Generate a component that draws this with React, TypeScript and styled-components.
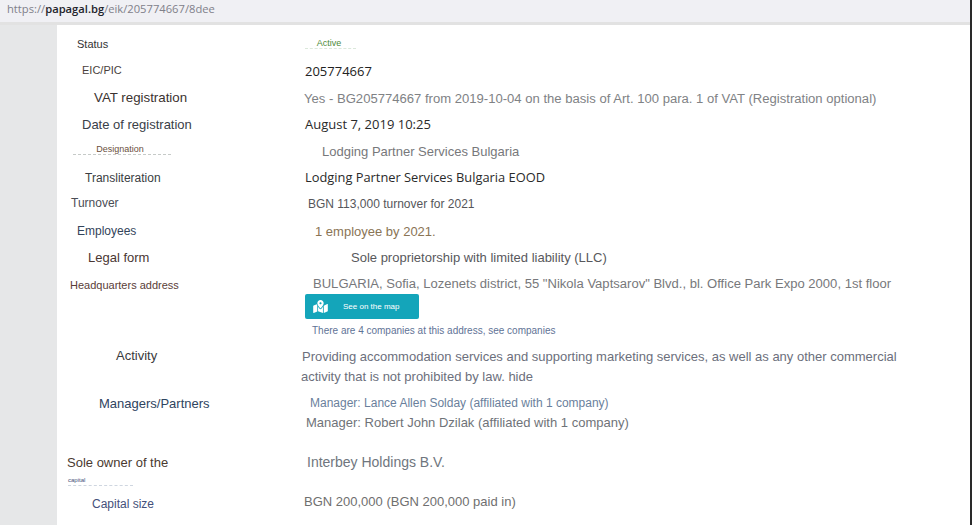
import React from 'react'
import styled, { createGlobalStyle } from 'styled-components'
import { FaMapMarkedAlt } from 'react-icons/fa'

const GlobalStyle = createGlobalStyle`
  html, body {
    margin: 0;
    padding: 0;
    background: #fff;
    overflow: hidden;
  }
  body {
    font-family: "Liberation Sans", Arial, sans-serif;
  }
`

const Page = styled.div`
  width: 972px;
  height: 525px;
  box-sizing: border-box;
  display: flex;
  flex-direction: column;
  border-right: 2px solid #2a2a2a;
  overflow: hidden;
`

const AddressBar = styled.div`
  height: 22px;
  flex: none;
  padding-left: 7px;
  background: #f0f0f4;
  border-bottom: 3px solid #e2e2e2;
  font-family: "Open Sans", sans-serif;
  font-size: 11.2px;
  line-height: 17px;
  color: #80808a;
  b {
    font-weight: 600;
    color: #23232b;
  }
`

const Body = styled.div`
  flex: 1;
  display: flex;
  min-height: 0;
`

const Gutter = styled.div`
  width: 57px;
  flex: none;
  background: #e6e7e8;
`

const Sheet = styled.main`
  flex: 1;
  padding: 7px 0 0 1px;
  background: #fff;
`

const Row = styled.div<{ $height: number }>`
  display: grid;
  grid-template-columns: 244px 1fr;
  height: ${(p) => p.$height}px;
`

const Label = styled.div<{ $indent: number; $size: number; $color: string; $top?: number }>`
  padding-left: ${(p) => p.$indent}px;
  padding-top: ${(p) => p.$top ?? 6}px;
  font-size: ${(p) => p.$size}px;
  line-height: 15px;
  color: ${(p) => p.$color};
  white-space: nowrap;
`

const Value = styled.div<{
  $indent: number
  $size: number
  $color: string
  $strong?: boolean
  $top?: number
}>`
  padding-left: ${(p) => p.$indent}px;
  padding-top: ${(p) => p.$top ?? 6}px;
  font-family: ${(p) =>
    p.$strong ? '"Open Sans", sans-serif' : '"Liberation Sans", Arial, sans-serif'};
  font-weight: ${(p) => (p.$strong ? 500 : 400)};
  font-size: ${(p) => p.$size}px;
  line-height: 15px;
  color: ${(p) => p.$color};
  white-space: nowrap;
`

const Dashed = styled.span<{ $width: number; $color?: string; $align?: string; $shift?: number }>`
  display: block;
  width: ${(p) => p.$width}px;
  line-height: 10px;
  box-sizing: border-box;
  padding-right: ${(p) => p.$shift ?? 0}px;
  border-bottom: 1px dashed ${(p) => p.$color ?? '#dfe5e2'};
  text-align: ${(p) => p.$align ?? 'center'};
`

const SmallLabel = styled.div`
  padding-left: 10px;
  margin-top: 5px;
  font-size: 6px;
  line-height: 10px;
  color: #44507a;
`

const MapButton = styled.a`
  display: flex;
  align-items: center;
  width: 114px;
  height: 25px;
  margin: 3px 0 0 3px;
  padding-left: 8px;
  box-sizing: border-box;
  border-radius: 2px;
  background: #14a5ba;
  color: #fff;
  font-size: 8px;
  svg {
    width: 15px;
    height: 13px;
    margin-right: 15px;
  }
`

const CompaniesLink = styled.div`
  margin: 6px 0 0 10px;
  font-size: 10px;
  line-height: 12px;
  color: #5f7396;
`

const TextLine = styled.div<{ $indent: number; $gap?: number; $color?: string; $size?: number }>`
  margin-left: ${(p) => p.$indent}px;
  margin-top: ${(p) => p.$gap ?? 0}px;
  color: ${(p) => p.$color ?? 'inherit'};
  font-size: ${(p) => (p.$size ? `${p.$size}px` : 'inherit')};
`

type Item = {
  height: number
  label: string
  labelIndent: number
  labelSize: number
  labelColor: string
  labelTop?: number
  value: string
  valueIndent: number
  valueSize: number
  valueColor: string
  valueTop?: number
  strong?: boolean
}

const topRows: Item[] = [
  { height: 27, label: 'EIC/PIC', labelIndent: 24, labelSize: 11, labelColor: '#4a3f3c', labelTop: 5, value: '205774667', valueIndent: 3, valueSize: 13, valueColor: '#222', strong: true, valueTop: 6 },
  { height: 27, label: 'VAT registration', labelIndent: 36, labelSize: 13.3, labelColor: '#3b3230', labelTop: 5, value: 'Yes - BG205774667 from 2019-10-04 on the basis of Art. 100 para. 1 of VAT (Registration optional)', valueIndent: 2, valueSize: 13.08, valueColor: '#808285', valueTop: 6 },
  { height: 26, label: 'Date of registration', labelIndent: 24, labelSize: 13, labelColor: '#3a4048', labelTop: 5, value: 'August 7, 2019 10:25', valueIndent: 3, valueSize: 13, valueColor: '#2a2a2a', strong: true, valueTop: 5 },
]

const midRows: Item[] = [
  { height: 27, label: 'Transliteration', labelIndent: 27, labelSize: 12, labelColor: '#3a3d42', labelTop: 6, value: 'Lodging Partner Services Bulgaria EOOD', valueIndent: 3, valueSize: 12.85, valueColor: '#2a2a2a', strong: true, valueTop: 5 },
  { height: 27, label: 'Turnover', labelIndent: 13, labelSize: 12, labelColor: '#4a4d55', labelTop: 4, value: 'BGN 113,000 turnover for 2021', valueIndent: 6, valueSize: 12, valueColor: '#55565a', valueTop: 5 },
  { height: 27, label: 'Employees', labelIndent: 19, labelSize: 12, labelColor: '#33445a', labelTop: 5, value: '1 employee by 2021.', valueIndent: 13, valueSize: 13, valueColor: '#8a7455', valueTop: 5 },
  { height: 27, label: 'Legal form', labelIndent: 30, labelSize: 13, labelColor: '#4a3733', labelTop: 4, value: 'Sole proprietorship with limited liability (LLC)', valueIndent: 49, valueSize: 13, valueColor: '#58585c', valueTop: 4 },
]

const Cell = styled.div<{ $size: number; $top: number; $color: string; $leading?: number }>`
  padding-top: ${(p) => p.$top}px;
  font-size: ${(p) => p.$size}px;
  line-height: ${(p) => p.$leading ?? 15}px;
  color: ${(p) => p.$color};
  white-space: nowrap;
`

const renderRow = (r: Item) => (
  <Row key={r.label} $height={r.height}>
    <Label $indent={r.labelIndent} $size={r.labelSize} $color={r.labelColor} $top={r.labelTop}>
      {r.label}
    </Label>
    <Value
      $indent={r.valueIndent}
      $size={r.valueSize}
      $color={r.valueColor}
      $strong={r.strong}
      $top={r.valueTop}
    >
      {r.value}
    </Value>
  </Row>
)

export default function App() {
  return (
    <Page>
      <GlobalStyle />
      <AddressBar>
        https://<b>papagal.bg</b>/eik/205774667/8dee
      </AddressBar>
      <Body>
        <Gutter />
        <Sheet>
          <Row $height={26}>
            <Label $indent={19} $size={11} $color="#333" $top={5}>
              Status
            </Label>
            <Value $indent={3} $size={9} $color="#4d8b3a" $top={6}>
              <Dashed $width={51} $color="#dbe8db" $shift={3}>
                Active
              </Dashed>
            </Value>
          </Row>
          {topRows.map(renderRow)}
          <Row $height={27}>
            <Label $indent={15} $size={9} $color="#6a4f3c" $top={6}>
              <Dashed $width={98} $color="#c6cac8" $shift={4}>
                Designation
              </Dashed>
            </Label>
            <Value $indent={20} $size={13} $color="#77787b" $top={6}>
              Lodging Partner Services Bulgaria
            </Value>
          </Row>
          {midRows.map(renderRow)}
          <Row $height={74}>
            <Label $indent={12} $size={11} $color="#5a3d38" $top={5}>
              Headquarters address
            </Label>
            <Cell $size={13.06} $top={3} $color="#77787b">
              <TextLine $indent={11}>
                BULGARIA, Sofia, Lozenets district, 55 "Nikola Vaptsarov" Blvd., bl. Office Park Expo 2000, 1st floor
              </TextLine>
              <MapButton>
                <FaMapMarkedAlt />
                See on the map
              </MapButton>
              <CompaniesLink>There are 4 companies at this address, see companies</CompaniesLink>
            </Cell>
          </Row>
          <Row $height={49}>
            <Label $indent={58} $size={13} $color="#3a3a3c" $top={1}>
              Activity
            </Label>
            <Cell $size={13} $top={0} $color="#6c6f7c" $leading={20}>
              <TextLine $indent={0}>
                Providing accommodation services and supporting marketing services, as well as any other commercial
              </TextLine>
              <TextLine $indent={-1}>activity that is not prohibited by law. hide</TextLine>
            </Cell>
          </Row>
          <Row $height={58}>
            <Label $indent={41} $size={13} $color="#2f4460" $top={0}>
              Managers/Partners
            </Label>
            <Cell $size={12} $top={0} $color="#6a7f9c" $leading={15}>
              <TextLine $indent={8}>Manager: Lance Allen Solday (affiliated with 1 company)</TextLine>
              <TextLine $indent={4} $gap={4} $color="#6f7378" $size={13}>
                Manager: Robert John Dzilak (affiliated with 1 company)
              </TextLine>
            </Cell>
          </Row>
          <Row $height={40}>
            <div>
              <Label $indent={9} $size={13} $color="#4a3a30" $top={1}>
                Sole owner of the
              </Label>
              <SmallLabel>
                <Dashed $width={65} $align="left" $color="#cfd6e0">
                  capital
                </Dashed>
              </SmallLabel>
            </div>
            <Cell $size={14} $top={1} $color="#6f767e">
              <TextLine $indent={5}>Interbey Holdings B.V.</TextLine>
            </Cell>
          </Row>
          <Row $height={25}>
            <Label $indent={34} $size={12} $color="#44507a" $top={3}>
              Capital size
            </Label>
            <Cell $size={13} $top={0} $color="#6f6f6f">
              <TextLine $indent={2}>BGN 200,000 (BGN 200,000 paid in)</TextLine>
            </Cell>
          </Row>
        </Sheet>
      </Body>
    </Page>
  )
}
